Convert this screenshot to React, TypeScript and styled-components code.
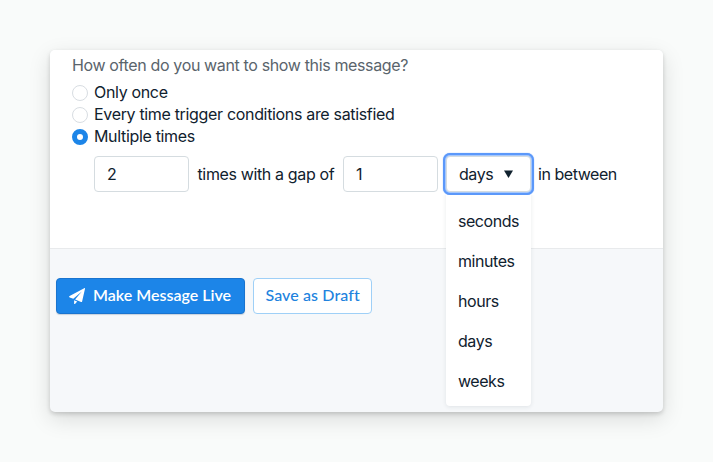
import React from "react";
import styled, { createGlobalStyle } from "styled-components";

const GlobalStyle = createGlobalStyle`
  * { box-sizing: border-box; }
  body {
    margin: 0;
    background: #f9fbfa;
    color: #10212e;
    font: 400 16px/22px Inter, sans-serif;
    letter-spacing: -0.36px;
  }
`;

const Page = styled.main`
  width: 713px;
  height: 462px;
  padding: 50px;
  overflow: hidden;
`;

const Card = styled.section`
  width: 613px;
  height: 362px;
  display: flex;
  flex-direction: column;
  border-radius: 5px;
  background: #f6f8fa;
  box-shadow: 0 2px 4px rgba(0, 0, 0, 0.16), 0 7px 22px rgba(0, 0, 0, 0.13);
`;

const Settings = styled.div`
  height: 199px;
  padding: 4px 22px 0;
  background: #fff;
  border-bottom: 1px solid #e8eaec;
  border-radius: 5px 5px 0 0;
`;

const Question = styled.div`
  margin-bottom: 5px;
  color: #5a646c;
`;

const Option = styled.div`
  display: flex;
  align-items: center;
  gap: 6px;
  height: 22px;
  letter-spacing: -0.33px;
`;

const Radio = styled.span<{ $checked?: boolean }>`
  width: 16px;
  height: 16px;
  margin-top: 1px;
  flex: none;
  border-radius: 50%;
  background: #fff;
  border: ${({ $checked }) => ($checked ? "5px solid #1c85e8" : "1px solid #d8dde2")};
`;

const Interval = styled.div`
  display: flex;
  align-items: center;
  height: 36px;
  margin: 9px 0 0 22px;
  white-space: nowrap;
`;

const Field = styled.input`
  width: 95px;
  height: 36px;
  padding: 0 12px;
  border: 1px solid #d5dce0;
  border-radius: 4px;
  background: #fff;
  color: inherit;
  font: inherit;
`;

const Between = styled.span`
  width: 154px;
  padding-left: 8.5px;
`;

const Suffix = styled.span`
  margin-left: 7px;
  letter-spacing: -0.45px;
`;

const Dropdown = styled.div`
  position: relative;
  margin-left: 8px;
`;

const Trigger = styled.button`
  display: flex;
  align-items: center;
  justify-content: space-between;
  width: 85px;
  height: 36px;
  padding: 0 17px 0 12px;
  border: 1px solid #d5dce0;
  border-radius: 4px;
  background: #fff;
  box-shadow: 0 0 0 1px #a5c7fc, 0 0 0 3px #5b98fa, 0 0 1px 3px #5b98fa;
  color: inherit;
  font: inherit;
  letter-spacing: -0.45px;
`;

const Menu = styled.ul`
  position: absolute;
  top: 36px;
  left: 0;
  z-index: 1;
  width: 85px;
  margin: 0;
  padding: 10px 0 4px;
  list-style: none;
  background: #fff;
  border-radius: 0 0 4px 4px;
  box-shadow: 0 1px 4px rgba(25, 45, 60, 0.1);
  clip-path: inset(3px -8px -8px -8px);
  letter-spacing: -0.45px;
`;

const MenuItem = styled.li`
  height: 40px;
  padding-left: 12px;
  line-height: 38px;
`;

const Actions = styled.footer`
  display: flex;
  gap: 8px;
  padding: 29px 6px;
`;

const Button = styled.button<{ $primary?: boolean }>`
  display: flex;
  align-items: center;
  gap: 8px;
  width: ${({ $primary }) => ($primary ? 189 : 119)}px;
  height: 36px;
  padding: 0 ${({ $primary }) => ($primary ? 12 : 11.5)}px;
  border: 1px solid ${({ $primary }) => ($primary ? "#1974cf" : "#9fd0f7")};
  border-radius: 4px;
  background: ${({ $primary }) => ($primary ? "#1c85e8" : "#fff")};
  color: ${({ $primary }) => ($primary ? "#fff" : "#2082de")};
  box-shadow: ${({ $primary }) => ($primary ? "0 1px 1px rgba(20, 60, 100, 0.2)" : "none")};
  font: ${({ $primary }) => ($primary ? "600 16px Lato" : "500 16px Lato")}, sans-serif;
  letter-spacing: ${({ $primary }) => ($primary ? "0" : "0.1px")};
  white-space: nowrap;
`;

const Label = styled.span`
  margin-top: -3px;
`;

const PaperPlane = () => (
  <svg width="16" height="16" viewBox="0 0 16 16" fill="currentColor">
    <path d="M15.2.2.6 8.1c-.7.4-.6 1 .1 1.3l3.6 1.4L12.8 3.6 6.1 11.6l6 2.4c.5.2.9-.1 1-.6L16 .7c.1-.5-.3-.8-.8-.5z" />
    <path d="M5.1 12.3v3.1c0 .6.7.8 1.1.4l2-2.3z" />
  </svg>
);

const units = ["seconds", "minutes", "hours", "days", "weeks"];

export default function App() {
  return (
    <Page>
      <GlobalStyle />
      <Card>
        <Settings>
          <Question>How often do you want to show this message?</Question>
          <Option><Radio />Only once</Option>
          <Option><Radio />Every time trigger conditions are satisfied</Option>
          <Option><Radio $checked />Multiple times</Option>
          <Interval>
            <Field defaultValue="2" />
            <Between>times with a gap of</Between>
            <Field defaultValue="1" />
            <Dropdown>
              <Trigger>
                days
                <svg width="9" height="8" viewBox="0 0 9 8"><path d="M0 0.5h9L4.5 8z" fill="#10212e" /></svg>
              </Trigger>
              <Menu>{units.map((unit) => <MenuItem key={unit}>{unit}</MenuItem>)}</Menu>
            </Dropdown>
            <Suffix>in between</Suffix>
          </Interval>
        </Settings>
        <Actions>
          <Button $primary><PaperPlane /><Label>Make Message Live</Label></Button>
          <Button><Label>Save as Draft</Label></Button>
        </Actions>
      </Card>
    </Page>
  );
}
